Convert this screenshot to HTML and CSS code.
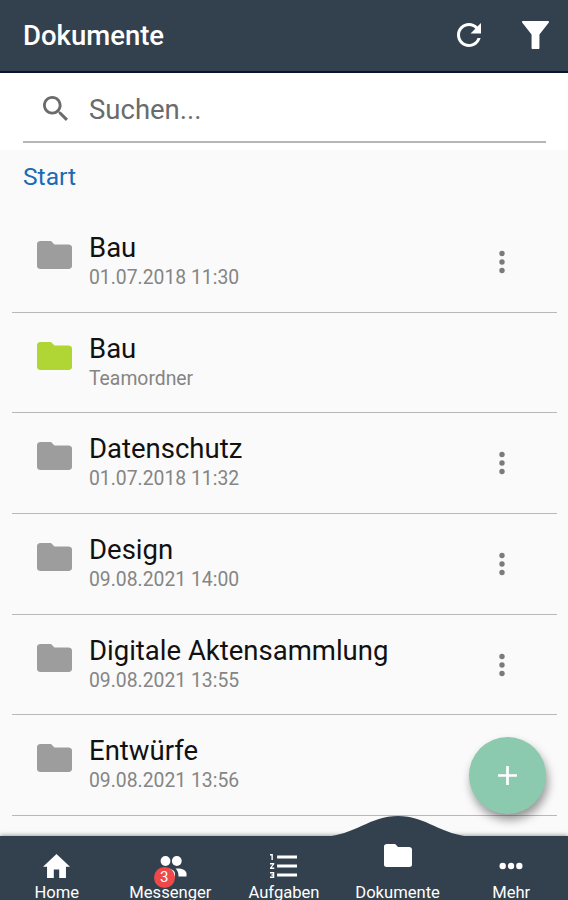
FILE: index.html
```html
<!DOCTYPE html>
<html lang="de">

<head>
  <meta charset="UTF-8" />
  <meta name="viewport" content="width=device-width, initial-scale=1.0" />
  <title>Dokumente</title>
  <link rel="stylesheet" href="styles.css">
</head>

<body>
  <svg class="sprite" aria-hidden="true">
    <symbol id="folder" viewBox="2 4 20 16" preserveAspectRatio="none">
      <path d="M10 4H4c-1.100 0-2 .7-2 1.600v12.800c0 .9.900 1.600 2 1.600h16c1.100 0 2-.7 2-1.600V7.600c0-.9-.9-1.600-2-1.600h-8l-2-2z" />
    </symbol>
    <symbol id="dots" viewBox="0 0 6 24">
      <circle cx="3" cy="3.500" r="2.700" />
      <circle cx="3" cy="12" r="2.700" />
      <circle cx="3" cy="20.500" r="2.700" />
    </symbol>
  </svg>

  <header>
    <h1>Dokumente</h1>
    <div class="header-buttons">
      <button aria-label="Aktualisieren">
        <svg class="refresh" viewBox="4 4 16 16"><path d="M17.650 6.350C16.200 4.900 14.210 4 12 4c-4.420 0-7.990 3.580-7.990 8s3.570 8 7.990 8c3.730 0 6.840-2.550 7.730-6h-2.080c-.82 2.330-3.040 4-5.650 4-3.310 0-6-2.690-6-6s2.690-6 6-6c1.660 0 3.140.69 4.220 1.780L13 11h7V4l-2.350 2.350z" /></svg>
      </button>
      <button aria-label="Filter">
        <svg class="filter" viewBox="0 0 26 27"><path d="M1 0h24c1 0 1.300 1 .7 1.700L16.800 13V26c0 .6-.4 1-1 1h-5.600c-.6 0-1-.4-1-1V13L.3 1.700C-.3 1 0 0 1 0z" /></svg>
      </button>
    </div>
  </header>

  <div class="search">
    <label class="search-field">
      <svg viewBox="3 3 17.500 17.500"><path d="M15.500 14h-.79l-.28-.27C15.410 12.590 16 11.110 16 9.500 16 5.910 13.090 3 9.500 3S3 5.910 3 9.500 5.910 16 9.500 16c1.610 0 3.090-.59 4.230-1.570l.27.28v.79l5 4.990L20.490 19l-4.990-5zm-6 0C7.010 14 5 11.990 5 9.500S7.010 5 9.500 5 14 7.010 14 9.500 11.990 14 9.500 14z" /></svg>
      <input type="text" placeholder="Suchen..." />
    </label>
  </div>

  <main>
    <a class="breadcrumb">Start</a>
    <ul class="document-list">
      <li>
        <svg class="folder"><use href="#folder" /></svg>
        <div class="info"><h2>Bau</h2><p>01.07.2018 11:30</p></div>
        <svg class="more"><use href="#dots" /></svg>
      </li>
      <li>
        <svg class="folder team"><use href="#folder" /></svg>
        <div class="info"><h2>Bau</h2><p>Teamordner</p></div>
      </li>
      <li>
        <svg class="folder"><use href="#folder" /></svg>
        <div class="info"><h2>Datenschutz</h2><p>01.07.2018 11:32</p></div>
        <svg class="more"><use href="#dots" /></svg>
      </li>
      <li>
        <svg class="folder"><use href="#folder" /></svg>
        <div class="info"><h2>Design</h2><p>09.08.2021 14:00</p></div>
        <svg class="more"><use href="#dots" /></svg>
      </li>
      <li>
        <svg class="folder"><use href="#folder" /></svg>
        <div class="info"><h2>Digitale Aktensammlung</h2><p>09.08.2021 13:55</p></div>
        <svg class="more"><use href="#dots" /></svg>
      </li>
      <li>
        <svg class="folder"><use href="#folder" /></svg>
        <div class="info"><h2>Entwürfe</h2><p>09.08.2021 13:56</p></div>
      </li>
    </ul>
  </main>

  <button class="fab" aria-label="Hinzufügen">
    <svg viewBox="0 0 20 20"><path d="M10 1v18M1 10h18" /></svg>
  </button>

  <nav>
    <svg class="bump" viewBox="0 0 150 22"><path d="M0 22C32 20 47 1 75 1s43 19 75 21z" /></svg>
    <a>
      <svg class="home" viewBox="2 3 20 17" preserveAspectRatio="none"><path d="M10 20v-6h4v6h5v-8h3L12 3 2 12h3v8z" /></svg>
      <span>Home</span>
    </a>
    <a>
      <svg class="people" viewBox="0 0 28 21"><circle cx="6.500" cy="5" r="4.900" /><circle cx="17.800" cy="5" r="4.900" /><path d="M0 20.500v-3c0-3 4-5 8-5s8 2 8 5v3zM16.500 12.600c5-.8 11 1.200 11 4.900v3h-8c0-3-.5-5.500-3-7.900z" /></svg>
      <b class="badge">3</b>
      <span>Messenger</span>
    </a>
    <a>
      <svg class="tasks" viewBox="2 4 19 16" preserveAspectRatio="none"><path d="M2 17h2v.5H3v1h1v.5H2v1h3v-4H2v1zm1-9h1V4H2v1h1v3zm-1 3h1.800L2 13.100v.9h3v-1H3.200L5 10.900V10H2v1zm5-6v2h14V5H7zm0 14h14v-2H7v2zm0-6h14v-2H7v2z" /></svg>
      <span>Aufgaben</span>
    </a>
    <a class="active">
      <svg class="docs"><use href="#folder" /></svg>
      <span>Dokumente</span>
    </a>
    <a>
      <svg class="mehr" viewBox="0 0 24 8"><circle cx="3.700" cy="4" r="3.200" /><circle cx="12" cy="4" r="3.200" /><circle cx="20.300" cy="4" r="3.200" /></svg>
      <span>Mehr</span>
    </a>
  </nav>
</body>

</html>
```
FILE: styles.css
```css
* { margin: 0; padding: 0; box-sizing: border-box; }
body {
  font-family: Roboto, "Liberation Sans", sans-serif;
  background-color: #fafafa;
  color: #111;
  height: 900px;
  display: flex;
  flex-direction: column;
  position: relative;
  overflow: hidden;
}
button { background: none; border: none; }
svg { display: block; fill: currentColor; flex: none; }
.sprite { position: absolute; width: 0; height: 0; }
header {
  background-color: #33414e;
  border-bottom: 2px solid #0b1238;
  color: white;
  height: 73px;
  flex: none;
  padding: 0 19px 1px 23px;
  display: flex;
  justify-content: space-between;
  align-items: center;
}
header h1 { font-size: 27.5px; font-weight: 500; }
.header-buttons { display: flex; align-items: center; gap: 41px; padding-bottom: 1px; }
.header-buttons button { color: white; }
.refresh { width: 24px; height: 24px; }
.filter { width: 27px; height: 28px; }
.search {
  background-color: white;
  height: 77px;
  flex: none;
  padding: 0 22px 7px 23px;
}
.search-field {
  height: 70px;
  padding: 3px 0 0 20px;
  border-bottom: 2px solid #b4b7b5;
  display: flex;
  align-items: center;
  gap: 21px;
}
.search-field svg { width: 25px; height: 25px; color: #6b6b6b; }
.search-field input {
  border: none;
  outline: none;
  font-family: inherit;
  font-size: 27.5px;
  width: 400px;
  padding-top: 2px;
}
.search-field input::placeholder { color: #6b6b6b; }
main { flex: 1; }
.breadcrumb {
  display: block;
  height: 62px;
  padding: 12px 23px 0;
  font-size: 24.6px;
  line-height: 30px;
  color: #1a6bb5;
}
.document-list { list-style: none; padding: 0 11px 0 12px; }
.document-list li {
  height: 100.7px;
  border-bottom: 1px solid #b8b8b8;
  padding: 0 52px 0 25px;
  display: flex;
  align-items: flex-start;
}
.folder { width: 35px; height: 28px; margin-top: 29px; color: #9d9d9d; }
.folder.team { color: #b0d636; }
.info { flex: 1; padding: 19px 0 0 17px; }
.info h2 { font-size: 27.5px; font-weight: 400; line-height: 34px; }
.info p { font-size: 19.35px; line-height: 26px; color: #858585; }
.more { width: 6px; height: 24px; margin-top: 38px; color: #7b7b7b; }
.fab {
  position: absolute;
  left: 469px;
  top: 737px;
  width: 77px;
  height: 77px;
  border-radius: 50%;
  background-color: #8ccab0;
  box-shadow: 2px 6px 10px rgba(0, 0, 0, 0.4);
  display: flex;
  justify-content: center;
  align-items: center;
}
.fab svg { width: 21px; height: 21px; stroke: white; stroke-width: 2.6; }
/* Bottom navigation */
nav {
  position: absolute;
  left: 0;
  right: 0;
  bottom: 0;
  height: 64px;
  background-color: #33414e;
  box-shadow: 0 -1px 4px rgba(0, 0, 0, 0.35);
  color: white;
  display: grid;
  grid-template-columns: repeat(5, 1fr);
}
nav a {
  position: relative;
  display: flex;
  flex-direction: column;
  align-items: center;
  justify-content: space-between;
  padding-top: 18px;
}
nav span { font-size: 16.6px; line-height: 20px; margin-bottom: -3px; }
nav a.active { padding-top: 8px; }
.bump {
  position: absolute;
  left: 323px;
  top: -21px;
  width: 150px;
  height: 22px;
  color: #33414e;
}
.home { width: 27px; height: 24px; }
.people { width: 28px; height: 21px; margin: 2px 0 0 5px; }
.tasks { width: 27px; height: 24px; }
.docs { width: 28px; height: 23px; }
.mehr { width: 24px; height: 8px; margin-top: 8px; }
.badge {
  position: absolute;
  left: 40px;
  top: 31px;
  width: 21px;
  height: 21px;
  border-radius: 50%;
  background-color: #f04848;
  font-size: 15px;
  font-weight: 400;
  line-height: 21px;
  text-align: center;
}
```
